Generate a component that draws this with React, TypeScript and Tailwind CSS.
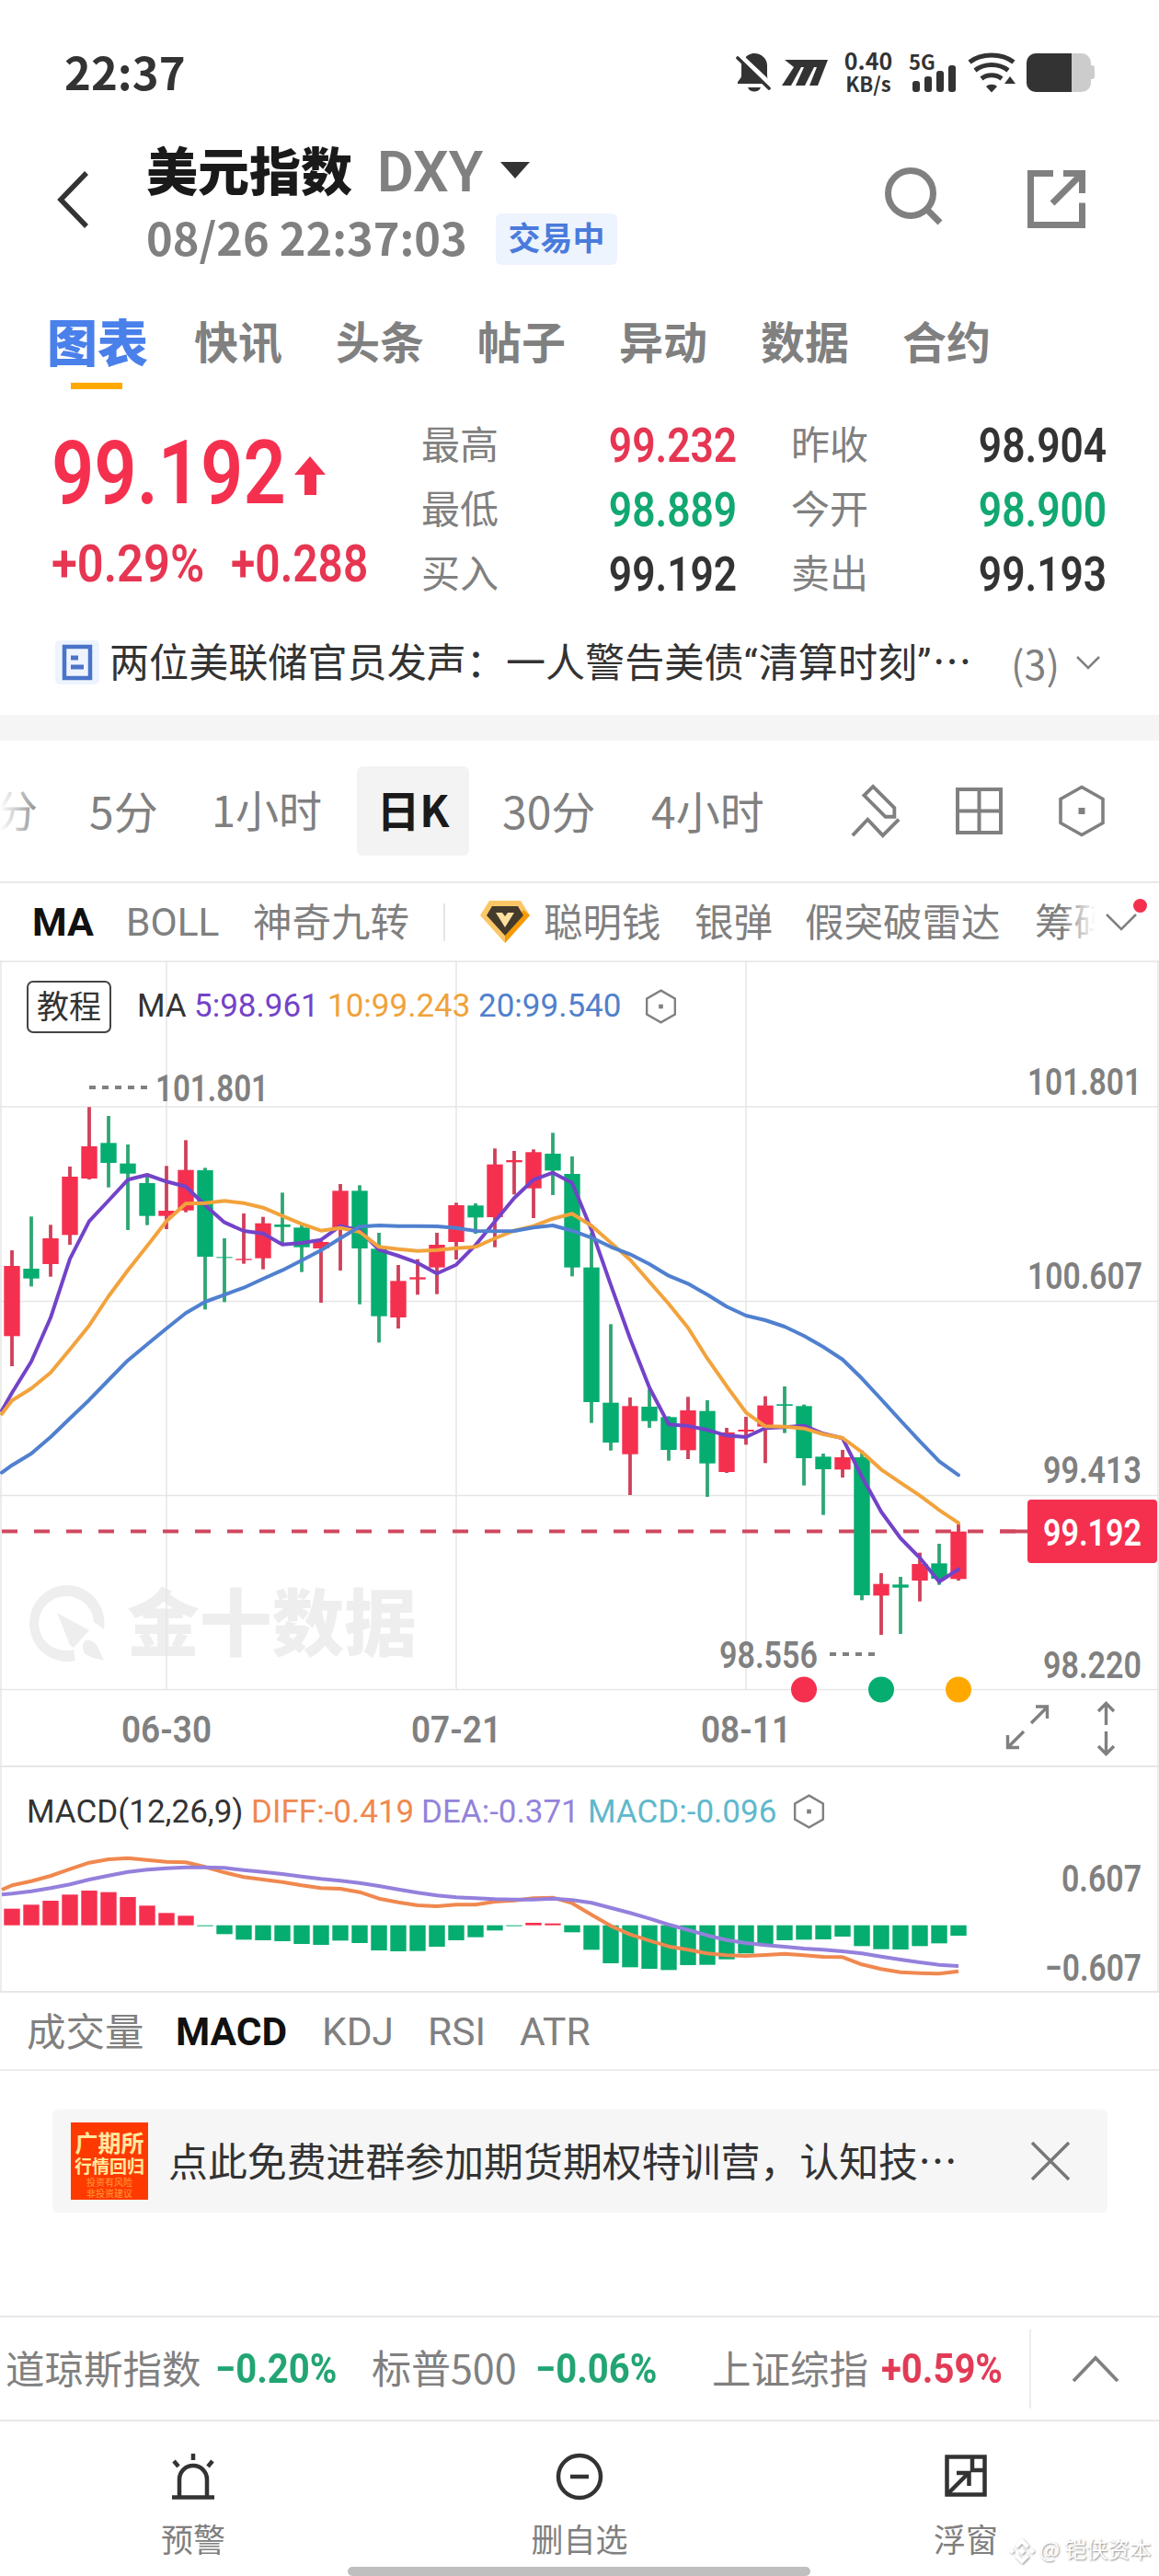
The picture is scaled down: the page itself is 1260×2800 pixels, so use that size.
import type { ReactNode } from 'react';

type Row = [up: 0 | 1, high: number, top: number, bottom: number, low: number];

const RED = '#f5304f';
const GREEN = '#05ad70';

const STEP = 21;
const FIRST = 13;

// vertical values are in thirds of a pixel, measured down from the panel offset
const candles: Row[] = [
  [1, 657, 708, 937, 1035], [0, 547, 717, 749, 775], [1, 574, 618, 702, 743], [1, 384, 417, 607, 639],
  [1, 190, 318, 423, 426], [0, 219, 307, 372, 452], [0, 312, 374, 407, 591], [0, 415, 438, 545, 575],
  [1, 382, 528, 545, 588], [1, 298, 395, 527, 533], [0, 388, 396, 678, 850], [0, 618, 679, 682, 826],
  [1, 537, 685, 689, 701], [1, 548, 569, 683, 719], [0, 469, 573, 581, 642], [0, 575, 583, 647, 728],
  [1, 622, 630, 651, 828], [1, 441, 463, 584, 723], [0, 445, 463, 651, 833], [0, 600, 652, 872, 958],
  [1, 705, 757, 876, 912], [1, 686, 745, 752, 802], [1, 600, 639, 713, 800], [1, 502, 510, 630, 687],
  [0, 504, 511, 550, 603], [1, 325, 377, 549, 647], [1, 333, 363, 370, 475], [1, 328, 337, 455, 552],
  [0, 274, 342, 397, 477], [0, 351, 408, 713, 742], [0, 600, 713, 1152, 1220], [0, 898, 1154, 1284, 1310],
  [1, 1137, 1165, 1322, 1455], [0, 1110, 1167, 1214, 1236], [0, 1198, 1201, 1308, 1343], [1, 1135, 1179, 1309, 1338],
  [0, 1146, 1181, 1352, 1461], [1, 1236, 1251, 1380, 1383], [1, 1200, 1242, 1248, 1291], [1, 1133, 1163, 1232, 1351],
  [0, 1101, 1159, 1164, 1253], [0, 1160, 1165, 1335, 1424], [0, 1320, 1330, 1371, 1520], [1, 1308, 1332, 1372, 1398],
  [0, 1310, 1332, 1782, 1798], [1, 1710, 1745, 1783, 1911], [0, 1722, 1747, 1757, 1908], [1, 1643, 1680, 1734, 1802],
  [0, 1614, 1678, 1728, 1748], [1, 1550, 1574, 1729, 1734],
];

const ma5 = [
  1122, 1020, 877, 685, 562, 495, 427, 411, 433, 449, 510, 566, 594, 602, 638, 633, 623, 578, 592, 655, 675, 698, 733,
  704, 640, 563, 487, 427, 404, 437, 590, 770, 945, 1105, 1225, 1230, 1243, 1261, 1266, 1237, 1234, 1229, 1255, 1270,
  1395, 1510, 1596, 1660, 1738, 1697,
];
const ma10 = [
  1147, 1108, 1056, 980, 902, 807, 722, 643, 562, 505, 503, 496, 503, 518, 545, 571, 593, 584, 597, 646, 653, 659, 656,
  650, 646, 618, 593, 578, 554, 538, 577, 632, 688, 760, 832, 910, 1010, 1100, 1186, 1231, 1232, 1238, 1257, 1269, 1315,
  1372, 1415, 1457, 1504, 1546,
];
const ma20 = [
  1358, 1320, 1266, 1205, 1145, 1080, 1016, 964, 912, 862, 825, 802, 779, 750, 722, 690, 657, 618, 580, 576, 578, 578,
  579, 584, 594, 595, 594, 583, 576, 593, 616, 646, 670, 702, 740, 766, 802, 841, 870, 885, 906, 936, 972, 1013, 1075,
  1143, 1212, 1280, 1345, 1390,
];

const macdBars = [
  464, 451, 438, 418, 405, 410, 426, 454, 478, 487, 521, 547, 565, 567, 570, 579, 582, 568, 576, 600, 603, 602, 588, 567,
  557, 535, 521, 510, 512, 541, 598, 642, 655, 660, 664, 648, 647, 629, 610, 585, 567, 565, 564, 555, 586, 596, 597, 586,
  577, 552,
];
const diff = [
  388, 374, 357, 335, 314, 303, 299, 305, 311, 313, 328, 346, 361, 369, 377, 388, 397, 399, 410, 431, 443, 453, 456, 451,
  451, 441, 437, 430, 428, 446, 484, 520, 548, 568, 587, 598, 610, 616, 618, 615, 611, 616, 621, 622, 646, 661, 671, 674,
  676, 668,
];
const dea = [
  415, 407, 397, 385, 369, 356, 344, 337, 332, 329, 329, 331, 338, 344, 351, 359, 367, 373, 380, 390, 401, 412, 421, 427,
  430, 433, 434, 434, 431, 436, 445, 461, 478, 496, 516, 533, 551, 566, 576, 583, 588, 594, 598, 603, 610, 620, 630, 639,
  647, 651,
];

const line = (start: number, values: number[], offset: number) =>
  `2,${offset + start / 3} ` + values.map((v, i) => `${FIRST + i * STEP},${(offset + v / 3).toFixed(1)}`).join(' ');

type AxisTextProps = { x: number; y: number; w: number; fill?: string; children: string };

function AxisText({ x, y, w, fill = '#808080', children }: AxisTextProps) {
  return (
    <text
      x={x}
      y={y}
      textLength={w}
      lengthAdjust="spacingAndGlyphs"
      fill={fill}
      fontSize="41"
      className="font-[Roboto,sans-serif] font-semibold"
    >
      {children}
    </text>
  );
}

function Hexagon({ className }: { className: string }) {
  return (
    <svg viewBox="0 0 52 57" className={className} fill="none" stroke="#808080" strokeWidth="3.6">
      <path d="M26 2.5 49 15.5V41.5L26 54.5 3 41.5V15.5Z" />
      <rect x="22.5" y="25" width="7" height="7" fill="#808080" stroke="none" />
    </svg>
  );
}

function StatusBar() {
  return (
    <div className="flex h-[157px] items-center">
      <div className="ml-[70px] w-[730px] shrink-0 pb-1 text-[49px] leading-none font-bold text-[#333]">22:37</div>
      <svg viewBox="0 0 40 44" className="h-[44px] w-[40px] shrink-0" fill="#333">
        <path d="M8 9C11 3 16 1 20 1c8 0 14 6 14 13v11c0 4 3 6 4 9H2c-1-3 4-5 4-9V14c0-2 1-4 2-5z" />
        <path d="M13 38h14c-2 6-12 6-14 0z" />
        <path d="M4 4 40 38" stroke="#fff" strokeWidth="7" />
        <path d="M2 6 36 39" stroke="#333" strokeWidth="3.6" strokeLinecap="round" />
      </svg>
      <svg viewBox="0 0 50 30" className="ml-[10px] h-[30px] w-[50px] shrink-0" fill="#333">
        <path d="M3 1h47L39 29H30L38 9H35L25 29H15L24 9H21L10 29H0L13 9Z" />
      </svg>
      <div className="ml-[15px] w-[58px] shrink-0 pb-[3px] text-center text-[25px] leading-[26px] font-bold text-[#333]">
        <div>0.40</div>
        <div className="text-[22px] leading-[24px]">KB/s</div>
      </div>
      <div className="relative ml-[15px] h-[44px] w-[52px] shrink-0">
        <svg viewBox="0 0 52 44" className="size-full" fill="#333">
          <rect x="4" y="31" width="8" height="12" rx="3" />
          <rect x="17" y="26" width="8" height="17" rx="3" />
          <rect x="30" y="20" width="8" height="23" rx="3" />
          <rect x="43" y="14" width="8" height="29" rx="3" />
        </svg>
        <div className="absolute -top-px left-0 text-[22px] leading-[20px] font-bold text-[#333]">5G</div>
      </div>
      <svg viewBox="0 0 54 44" className="ml-[11px] h-[44px] w-[54px] shrink-0" fill="none" stroke="#333" strokeWidth="5">
        <path d="M3 10.500C16 .5 38 .5 51 10.500" strokeLinecap="butt" />
        <path d="M9 19.500C19 11.500 35 11.500 45 19.500" />
        <path d="M16 28.500C22 23.500 32 23.500 38 28.500" />
        <path d="M21 37c3-3 9-3 12 0l-6 6.500z" fill="#333" stroke="none" />
        <path d="M47 26l6 8H41z" fill="#333" stroke="none" />
      </svg>
      <div className="relative ml-[11px] h-[42px] w-[74px] shrink-0">
        <div className="absolute top-[13px] right-0 h-[15px] w-[8px] rounded-[3px] bg-[#ccc]" />
        <div className="flex h-full w-[70px] overflow-hidden rounded-[10px] bg-[#ccc]">
          <div className="w-[49px] bg-[#333]" />
        </div>
      </div>
    </div>
  );
}

function Header() {
  return (
    <div className="flex h-[131px] items-start">
      <svg viewBox="0 0 36 62" className="mt-[29px] ml-[61px] h-[62px] w-[36px] shrink-0">
        <path d="M33 2 5 31l28 29" fill="none" stroke="#333" strokeWidth="5.500" />
      </svg>
      <div className="ml-[62px] w-[780px] shrink-0">
        <div className="flex h-[56px] items-center">
          <div className="w-[251px] shrink-0 pb-1 text-[56px] leading-none font-black text-[#1a1a1a]">美元指数</div>
          <div className="w-[134px] shrink-0 pt-1 font-[Roboto] text-[61px] leading-none font-semibold text-[#808080]">
            DXY
          </div>
          <svg viewBox="0 0 32 18" className="h-[18px] w-[32px]" fill="#333">
            <path d="M0 0h32L16 18z" />
          </svg>
        </div>
        <div className="mt-[18px] flex h-[57px] items-center">
          <div className="w-[380px] shrink-0 pb-1 text-[48.700px] leading-none font-bold whitespace-nowrap text-[#808080]">
            08/26 22:37:03
          </div>
          <div className="flex h-[56px] w-[132px] items-center justify-center rounded-[6px] bg-[#eef4fe] pb-1.5 text-[35px] leading-none font-bold text-[#4a7bdc]">
            交易中
          </div>
        </div>
      </div>
      <svg viewBox="0 0 66 66" className="mt-[23px] ml-[22px] size-[66px] shrink-0" fill="none" stroke="#808080" strokeWidth="7">
        <circle cx="29" cy="30" r="24.500" />
        <path d="M46 47 61 62" />
      </svg>
      <svg viewBox="0 0 63 63" className="mt-[28px] ml-[90px] size-[63px] shrink-0" fill="none" stroke="#808080" strokeWidth="7">
        <path d="M28 3.500H3.500V59.500H59.500V35.500" />
        <path d="M39 3.500H59.500V25M58 5 27 36" />
      </svg>
    </div>
  );
}

function Tabs() {
  return (
    <div className="flex h-[142px] pt-[53px]">
      <div className="ml-[51px] w-[160px] shrink-0">
        <div className="h-[60px] text-[55px] leading-[57px] font-black text-[#4a80ea]">图表</div>
        <div className="mt-[15px] ml-[26px] h-[7px] w-[56px] bg-[#ffa900]" />
      </div>
      {['快讯', '头条', '帖子', '异动', '数据', '合约'].map((t) => (
        <div key={t} className="w-[154px] shrink-0 text-[48px] leading-[56px] font-bold text-[#808080]">
          {t}
        </div>
      ))}
    </div>
  );
}

type QuoteCellProps = { label: string; value: string; color: string };

function QuoteCell({ label, value, color }: QuoteCellProps) {
  return (
    <div className="flex h-[70px] w-[344px] items-center justify-between text-[#808080]">
      <span className="pb-1.5 pl-px text-[42px]">{label}</span>
      <span className={`origin-right scale-x-[0.87] pt-1 font-[Roboto] text-[51px] font-semibold ${color}`}>
        {value}
      </span>
    </div>
  );
}

function Quote() {
  return (
    <div className="flex h-[244px] pt-[18px]">
      <div className="w-[457px] shrink-0 pl-[56px]">
        <div className="relative h-[126px]">
          <div className="origin-left scale-x-[0.845] font-[Roboto] text-[96px] leading-[133px] font-semibold whitespace-nowrap text-[#f5304f]">
            99.192
          </div>
          <svg viewBox="0 0 34 42" className="absolute top-[48px] left-[264px] h-[42px] w-[34px]" fill={RED}>
            <path d="M17 0 34 20H24V42H11V20H0Z" />
          </svg>
        </div>
        <div className="flex pt-[2px] text-[55px] leading-[75px] font-semibold whitespace-nowrap text-[#e63652]">
          <div className="w-[195px] shrink-0 font-[Roboto]">
            <span className="inline-block origin-left scale-x-[0.92]">+0.29%</span>
          </div>
          <div className="font-[Roboto]">
            <span className="inline-block origin-left scale-x-[0.87]">+0.288</span>
          </div>
        </div>
      </div>
      <div className="w-[402px]">
        <QuoteCell label="最高" value="99.232" color="text-[#e63652]" />
        <QuoteCell label="最低" value="98.889" color="text-[#12a871]" />
        <QuoteCell label="买入" value="99.192" color="text-[#333]" />
      </div>
      <div>
        <QuoteCell label="昨收" value="98.904" color="text-[#333]" />
        <QuoteCell label="今开" value="98.900" color="text-[#12a871]" />
        <QuoteCell label="卖出" value="99.193" color="text-[#333]" />
      </div>
    </div>
  );
}

function News() {
  return (
    <div className="flex h-[103px] items-center pb-[11px]">
      <svg viewBox="0 0 48 48" className="ml-[60px] size-[48px] shrink-0">
        <rect width="48" height="48" rx="5" fill="#eef4fe" />
        <rect x="10" y="7" width="28" height="34" fill="none" stroke="#4a74c8" strokeWidth="4.500" />
        <path d="M17 19h8M17 29h14" stroke="#4a74c8" strokeWidth="5" />
      </svg>
      <div className="ml-[11px] w-[980px] shrink-0 text-[43.100px] whitespace-nowrap text-[#333]">
        两位美联储官员发声：一人警告美债<span className="pr-px font-[Roboto]">“</span>清算时刻
        <span className="pr-px font-[Roboto]">”</span>⋯
      </div>
      <div className="w-[70px] shrink-0 text-[43px] text-[#808080]">(3)</div>
      <svg viewBox="0 0 28 16" className="h-[16px] w-[28px]" fill="none" stroke="#808080" strokeWidth="2.500">
        <path d="M2 2l12 12L26 2" />
      </svg>
    </div>
  );
}

function Intervals() {
  return (
    <div className="flex h-[155px] items-center border-b-2 border-[#e8e8e8] text-[47px] whitespace-nowrap text-[#808080]">
      <div className="relative w-[97px] shrink-0 overflow-hidden pb-1">
        <span className="-ml-[6px]">分</span>
        <div className="absolute inset-y-0 left-0 w-[46px] bg-linear-to-r from-white to-transparent" />
      </div>
      <div className="w-[133px] shrink-0 pb-1 text-[48px]">5分</div>
      <div className="w-[158px] shrink-0 pb-1">1小时</div>
      <div className="flex h-[97px] w-[122px] shrink-0 items-center justify-center rounded-[6px] bg-[#f3f3f3] pb-1 font-bold text-[#1a1a1a]">
        日K
      </div>
      <div className="ml-[36px] w-[162px] shrink-0 pb-1 text-[48px]">30分</div>
      <div className="w-[216px] shrink-0 pb-1 text-[48px]">4小时</div>
      <svg viewBox="0 0 56 62" className="h-[60px] w-[56px] shrink-0" fill="none" stroke="#808080" strokeWidth="4">
        <path d="M25 3 49 27V37H39L15 13Z" />
        <path d="M2 58 19 40 36 58 54 40" />
      </svg>
      <svg viewBox="0 0 51 51" className="ml-[59px] size-[51px] shrink-0" fill="none" stroke="#808080" strokeWidth="4">
        <path d="M2 2H49V49H2ZM25.500 2V49M2 25.500H49" />
      </svg>
      <Hexagon className="ml-[60px] h-[57px] w-[52px] shrink-0" />
    </div>
  );
}

function Indicators() {
  return (
    <div className="relative flex h-[84px] items-center text-[42.500px] whitespace-nowrap text-[#808080]">
      <div className="ml-[35px] w-[102px] shrink-0 pt-px font-[Roboto] text-[43px] font-bold text-[#111]">MA</div>
      <div className="w-[138px] shrink-0 pt-px font-[Roboto] text-[42.500px]">BOLL</div>
      <div className="w-[207px] shrink-0 pb-1">神奇九转</div>
      <div className="h-[41px] w-[2px] shrink-0 bg-[#e5e5e5]" />
      <svg viewBox="0 0 54 46" className="ml-[38px] h-[46px] w-[54px] shrink-0">
        <path d="M10 0H44L54 16 27 46 0 16Z" fill="#fbc766" />
        <path d="M47 10 54 16 27 46V38Z" fill="#f59a05" />
        <path d="M13 6H41L47 16 27 38 7 16Z" fill="#443a2c" />
        <path d="M17 13H24L27 17 30 13H37L27 29Z" fill="#fde0a0" />
      </svg>
      <div className="ml-[15px] w-[164px] shrink-0 pb-1">聪明钱</div>
      <div className="w-[120px] shrink-0 pb-1">银弹</div>
      <div className="w-[250px] shrink-0 pb-1">假突破雷达</div>
      <div className="relative w-[66px] shrink-0 overflow-hidden pb-1">
        筹码
        <div className="absolute inset-y-0 right-0 w-[36px] bg-linear-to-l from-white to-transparent" />
      </div>
      <svg viewBox="0 0 36 20" className="ml-[10px] h-[20px] w-[36px] shrink-0" fill="none" stroke="#808080" strokeWidth="2.500">
        <path d="M2 2l16 16L34 2" />
      </svg>
      <div className="absolute top-[17px] right-[13px] size-[15px] rounded-full bg-[#f5304f]" />
    </div>
  );
}

function PriceChart() {
  const base = 96;
  return (
    <div className="relative h-[877px] font-[Roboto]">
      <svg viewBox="0 0 1260 877" className="block h-[877px] w-full">
        <g fill="#eeeeee">
          <path d="M73 679a41 41.500 0 1 0 9 82l-2-12a30 29.500 0 1 1 22-30l11 8A41 41.500 0 0 0 73 679Z" />
          <path d="M62 709 97 728 80 747 76 744Z" />
          <path d="M93 739C100 738 105 742 107 748L113 761C103 758 91 757 90 748Q89 743 93 739Z" />
          <text
            x="138"
            y="750"
            fontSize="79"
            textLength="315"
            lengthAdjust="spacingAndGlyphs"
            className="font-['Noto_Sans_CJK_SC',sans-serif] font-black"
          >
            金十数据
          </text>
        </g>
        <path
          d="M0 1H1260M0 159H1260M0 370.500H1260M0 581.500H1260M0 792.500H1260M181 0V792M496 0V792M811 0V792M1 0V877M1259 0V877"
          stroke="#e6e6e6"
          strokeWidth="1.500"
          fill="none"
        />
        <path d="M0 876H1260" stroke="#e6e6e6" strokeWidth="2" />
        <path d="M2 620.500H1117" stroke="#d0485f" strokeWidth="4" strokeDasharray="17 18" />
        <path d="M1087 620.500H1117" stroke="#d0485f" strokeWidth="4" />

        {candles.map(([up, high, top, bottom, low], i) => {
          const x = FIRST + i * STEP;
          return (
            <g key={i} fill={up ? RED : GREEN}>
              <rect
                x={x - 1.9}
                y={base + high / 3}
                width="3.8"
                height={(low - high) / 3}
                fill={up ? '#d0405a' : '#2fa673'}
              />
              <rect x={x - 8.7} y={base + top / 3} width="17.4" height={(bottom - top) / 3} />
            </g>
          );
        })}

        <g fill="none" strokeWidth="4" strokeLinejoin="round" strokeLinecap="round">
          <polyline points={line(1180, ma5, base)} stroke="#7343c8" />
          <polyline points={line(1190, ma10, base)} stroke="#f2a33c" />
          <polyline points={line(1382, ma20, base)} stroke="#5080cf" />
        </g>

        <path d="M97 138H160" stroke="#808080" strokeWidth="4" strokeDasharray="7 7" />
        <AxisText x={169} y={153} w={123}>101.801</AxisText>
        <path d="M902 754H952" stroke="#808080" strokeWidth="4" strokeDasharray="7 7" />
        <AxisText x={782} y={768.5} w={107}>98.556</AxisText>

        <AxisText x={1117} y={146} w={124}>101.801</AxisText>
        <AxisText x={1117} y={357} w={125}>100.607</AxisText>
        <AxisText x={1134} y={568} w={107}>99.413</AxisText>
        <AxisText x={1134} y={779.5} w={107}>98.220</AxisText>
        <rect x="1117" y="586" width="141" height="69" rx="4" fill={RED} />
        <AxisText x={1134} y={636} w={107} fill="#fff">99.192</AxisText>

        <AxisText x={132} y={850} w={98}>06-30</AxisText>
        <AxisText x={447} y={850} w={98}>07-21</AxisText>
        <AxisText x={762} y={850} w={98}>08-11</AxisText>

        <circle cx="874" cy="792.500" r="14" fill={RED} />
        <circle cx="958" cy="792.500" r="14" fill={GREEN} />
        <circle cx="1042" cy="792.500" r="14" fill="#ffa900" />

        <g fill="none" stroke="#808080" strokeWidth="3.4">
          <path d="M1121 829 1138 812M1126 811H1138.500V824" />
          <path d="M1113 838 1096 855M1095.500 842V855.500H1108" />
          <path d="M1202.500 831V808M1194 816 1202.500 807.500 1211 816" />
          <path d="M1202.500 838V862M1194 854 1202.500 862.500 1211 854" />
        </g>
      </svg>

      <div className="absolute top-[21px] left-[29px] flex h-[58px] items-center text-[35px] leading-none whitespace-nowrap text-[#333]">
        <div className="flex h-[57px] w-[92px] items-center justify-center rounded-[7px] border-2 border-[#444] bg-white pb-1.5 font-['Noto_Sans_CJK_SC']">
          教程
        </div>
        <div className="ml-[28px] w-[62px] pb-0.5">MA</div>
        <div className="w-[145px] pb-0.5 text-[#7343c8]">5:98.961</div>
        <div className="w-[164px] pb-0.5 text-[#f0a23a]">10:99.243</div>
        <div className="w-[181px] pb-0.5 text-[#5080cc]">20:99.540</div>
        <Hexagon className="h-[38px] w-[35px]" />
      </div>
    </div>
  );
}

function MacdChart() {
  const zero = 171.7;
  return (
    <div className="relative h-[245px] border-b-2 border-[#e6e6e6] font-[Roboto]">
      <svg viewBox="0 0 1260 243" className="block h-[243px] w-full">
        <path d="M1 0V243M1259 0V243" stroke="#e6e6e6" strokeWidth="1.500" />
        {macdBars.map((v, i) => {
          const y = v / 3 - 1;
          return (
            <rect
              key={i}
              x={FIRST + i * STEP - 8.7}
              y={Math.min(y, zero)}
              width="17.4"
              height={Math.abs(y - zero)}
              fill={y < zero ? RED : GREEN}
            />
          );
        })}
        <g fill="none" strokeWidth="4" strokeLinejoin="round">
          <polyline points={line(402, diff, -1)} stroke="#f0884f" />
          <polyline points={line(418, dea, -1)} stroke="#9480dc" />
        </g>
        <AxisText x={1154} y={135} w={87}>0.607</AxisText>
        <AxisText x={1136} y={232} w={105}>−0.607</AxisText>
      </svg>
      <div className="absolute top-[28px] left-[29px] flex h-[40px] items-center text-[35px] leading-none whitespace-nowrap text-[#333]">
        <div className="w-[244px]">MACD(12,26,9)</div>
        <div className="w-[185px] text-[#f0884f]">DIFF:-0.419</div>
        <div className="w-[181px] text-[#9383db]">DEA:-0.371</div>
        <div className="w-[223px] text-[#5fb8cc]">MACD:-0.096</div>
        <Hexagon className="h-[38px] w-[35px]" />
      </div>
    </div>
  );
}

function SubTabs() {
  return (
    <div className="flex h-[85px] items-center border-b-2 border-[#ececec] font-[Roboto] text-[42.500px] text-[#808080]">
      <div className="ml-[29px] w-[162px] pb-1 font-['Noto_Sans_CJK_SC']">成交量</div>
      <div className="w-[159px] pt-0.5 font-bold text-[#111]">MACD</div>
      <div className="w-[115px] pt-0.5">KDJ</div>
      <div className="w-[100px] pt-0.5">RSI</div>
      <div className="pt-0.5">ATR</div>
    </div>
  );
}

function Banner() {
  return (
    <div className="mr-[56px] ml-[57px] mt-[42px] flex h-[112px] items-center rounded-[6px] bg-[#f6f6f6]">
      <div className="ml-[20px] flex size-[84px] shrink-0 flex-col items-center bg-[#ff3a00] pt-[7px] text-center whitespace-nowrap">
        <div className="text-[25px] leading-[28px] font-bold text-[#ffe9a0]">广期所</div>
        <div className="text-[19px] leading-[24px] font-bold text-[#ffe9a0]">行情回归</div>
        <div className="text-[10px] leading-[12px] text-[#ff9a3c]">投资有风险</div>
        <div className="text-[10px] leading-[12px] text-[#ff9a3c]">非投资建议</div>
      </div>
      <div className="ml-[22px] w-[938px] shrink-0 pb-1 text-[42.900px] whitespace-nowrap text-[#333]">
        点此免费进群参加期货期权特训营，认知技⋯
      </div>
      <svg viewBox="0 0 42 42" className="size-[42px] shrink-0" fill="none" stroke="#777" strokeWidth="3.500">
        <path d="M1 1 41 41M41 1 1 41" />
      </svg>
    </div>
  );
}

type TickerValueProps = { className: string; children: ReactNode };

function TickerValue({ className, children }: TickerValueProps) {
  return (
    <div className={`shrink-0 font-[Roboto] text-[44px] font-bold ${className}`}>
      <span className="inline-block origin-left scale-x-[0.91]">{children}</span>
    </div>
  );
}

function Ticker() {
  return (
    <div className="mt-[112px] flex h-[115px] items-center border-y-2 border-[#e8e8e8] text-[42.500px] whitespace-nowrap text-[#808080]">
      <div className="ml-[6px] w-[228px] shrink-0 pb-1">道琼斯指数</div>
      <TickerValue className="w-[170px] text-[#22a573]">−0.20%</TickerValue>
      <div className="w-[178px] shrink-0 pb-1 text-[43px]">标普500</div>
      <TickerValue className="w-[192px] text-[#22a573]">−0.06%</TickerValue>
      <div className="w-[184px] shrink-0 pb-1">上证综指</div>
      <TickerValue className="w-[161px] text-[#e23b56]">+0.59%</TickerValue>
      <div className="h-[86px] w-[2px] bg-[#ececec]" />
      <svg viewBox="0 0 52 30" className="ml-[44px] h-[30px] w-[52px] shrink-0" fill="none" stroke="#808080" strokeWidth="3.800">
        <path d="M2 28 26 3l24 25" />
      </svg>
    </div>
  );
}

function BottomBar() {
  return (
    <div className="relative h-[168px]">
      <div className="grid grid-cols-3 pt-[34px] text-[35px] leading-[44px] text-[#808080]">
        <div className="flex flex-col items-center">
          <svg viewBox="0 0 48 52" className="h-[52px] w-[48px]" fill="none" stroke="#333" strokeWidth="4.500">
            <path d="M9 47V29a15 15 0 0 1 30 0V47M1 48.500H47M24 1V8M3 9l5 6M45 9l-5 6" />
          </svg>
          <div className="mt-[19px]">预警</div>
        </div>
        <div className="flex flex-col items-center">
          <svg viewBox="0 0 52 52" className="size-[52px]" fill="none" stroke="#333" strokeWidth="4.500">
            <circle cx="26" cy="26" r="23" />
            <path d="M16 26H36" />
          </svg>
          <div className="mt-[19px]">删自选</div>
        </div>
        <div className="flex flex-col items-center">
          <svg viewBox="0 0 46 52" className="h-[52px] w-[46px]" fill="none" stroke="#333" strokeWidth="4.500">
            <path d="M2.500 4.500H43.500V45.500H2.500Z" />
            <path d="M30 4V19H43" />
            <path d="M4 44 26 22M13 22H26.500V36" />
          </svg>
          <div className="mt-[19px]">浮窗</div>
        </div>
      </div>
      <div className="absolute bottom-0 left-[378px] h-[10px] w-[503px] rounded-[5px] bg-[#bfbfbf]" />
      <div className="absolute top-[122px] left-[1096px] flex h-[38px] items-center text-[23.500px] leading-none whitespace-nowrap text-white [text-shadow:1px_1px_2px_#888]">
        <svg viewBox="0 0 30 30" className="size-[30px] drop-shadow-[1px_1px_1px_#999]" fill="#fff">
          <path d="M15 1 23 9 20 12 15 7 10 12 7 9ZM15 29 7 21 10 18 15 23 20 18 23 21ZM15 11 19 15 15 19 11 15ZM4 12 7 15 4 18 1 15ZM26 12 29 15 26 18 23 15Z" />
        </svg>
        <span className="ml-1 pb-1">@ 铠侠资本</span>
      </div>
    </div>
  );
}

export default function App() {
  return (
    <div
      lang="zh-CN"
      className="h-[2800px] w-[1260px] overflow-hidden bg-white font-['Noto_Sans_CJK_SC','Noto_Sans',sans-serif]"
    >
      <StatusBar />
      <Header />
      <Tabs />
      <Quote />
      <News />
      <div className="h-[28px] bg-[#f5f5f5]" />
      <Intervals />
      <Indicators />
      <PriceChart />
      <MacdChart />
      <SubTabs />
      <Banner />
      <Ticker />
      <BottomBar />
    </div>
  );
}
